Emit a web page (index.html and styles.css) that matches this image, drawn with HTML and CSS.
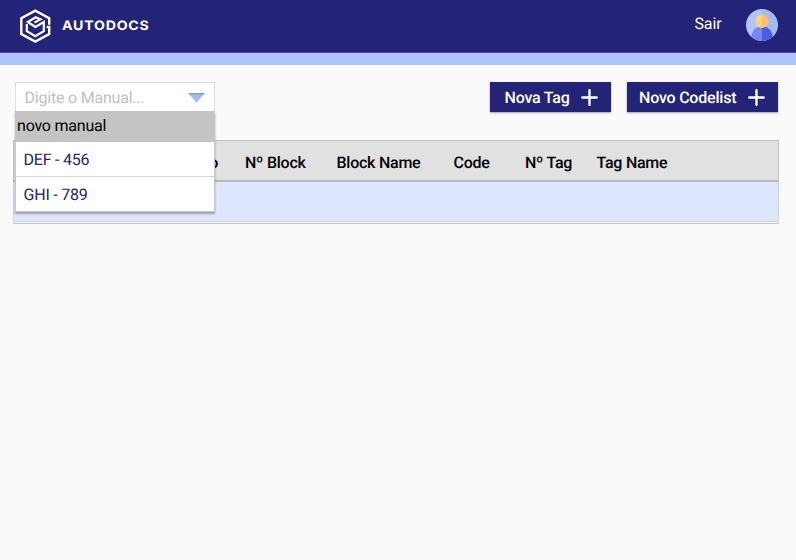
FILE: index.html
```html
<!DOCTYPE html>
<html lang="pt-BR">
<head>
<meta charset="utf-8">
<title>Autodocs</title>
<link rel="stylesheet" href="styles.css">
</head>
<body>
<header class="topbar">
  <div class="brand">
    <svg class="logo" viewBox="0 0 32 34" fill="none" stroke="#fff" stroke-width="2.4">
      <path d="M30.2 15.8V9.2L16.3 1.6 2.3 9.2V25L16.3 32.6 30.2 25V18H27.6"/>
      <path stroke-width="2.2" d="M7.8 15V22.1L16.3 27.1 24.8 22.1V13L16.4 17.9 8.8 13 16.6 8.2 21.4 10.4 15.4 13.4"/>
    </svg>
    <span class="wordmark">AUTODOCS</span>
  </div>
  <nav class="account">
    <span class="logout">Sair</span>
    <svg class="avatar" viewBox="0 0 32 32">
      <clipPath id="disc"><circle cx="16" cy="16" r="16"/></clipPath>
      <g clip-path="url(#disc)">
        <path fill="#afc5fc" d="M0 0h16v32H0z"/><path fill="#a3baf3" d="M16 0h16v32H16z"/>
        <path fill="#7b86ec" d="M16 17.5C9 17.5 5 22 5 32h11z"/>
        <path fill="#4a5ce8" d="M16 17.5C23 17.5 27 22 27 32H16z"/>
        <path fill="#ffd07d" d="M16 5.5a6.7 6.7 0 0 0 0 13.4z"/>
        <path fill="#ffc06b" d="M16 5.5a6.7 6.7 0 0 1 0 13.4z"/>
      </g>
    </svg>
  </nav>
</header>
<main class="content">
  <div class="toolbar">
    <div class="select">
      <div class="field"><span>Digite o Manual...</span>
        <svg class="caret" viewBox="0 0 17 10"><path fill="#a6bbfa" d="M0 0h17L8.5 9.7z"/><path fill="#8c9fdc" d="M0 0h17l-1.6 1.8H1.6z"/></svg>
      </div>
      <div class="menu">
        <div class="option active">novo manual</div>
        <div class="option">DEF - 456</div>
        <div class="option">GHI - 789</div>
      </div>
    </div>
    <div class="actions">
      <button class="button tag">Nova Tag<svg class="plus" viewBox="0 0 17 17"><path d="M8.5 1.3v14.4M1.3 8.5h14.4"/></svg></button>
      <button class="button codelist">Novo Codelist<svg class="plus" viewBox="0 0 17 17"><path d="M8.5 1.3v14.4M1.3 8.5h14.4"/></svg></button>
    </div>
  </div>
  <section class="records">
    <div class="row head">
      <span class="section">Seção</span><span>Nº Block</span><span>Block Name</span><span>Code</span><span>Nº Tag</span><span>Tag Name</span>
    </div>
    <div class="row empty"></div>
  </section>
</main>
</body>
</html>
```
FILE: styles.css
```css
* { box-sizing: border-box; }
body { margin: 0; background: #fafafa; font: 16px/20px Roboto, sans-serif; letter-spacing: -.21px; color: #000; text-rendering: geometricPrecision; }
.topbar { height: 65px; padding: 0 18px 0 19px; display: flex; justify-content: space-between; align-items: flex-start; background: #232378; border-bottom: 12px solid #afc5ff; box-shadow: inset 0 -1px #4c4c98; }
.brand { display: flex; align-items: center; height: 51px; }
.logo { width: 32px; height: 34px; }
.wordmark { margin: 1px 0 0 11px; color: #fff; font: 700 13px/20px Inter, sans-serif; letter-spacing: .7px; transform: scaleX(1.09); transform-origin: left; }
.account { display: flex; align-items: center; height: 50px; }
.logout { color: #fff; margin: -3px 24.5px 0 0; letter-spacing: -.1px; }
.avatar { width: 32px; height: 32px; }
.content { padding: 17px 17px 0 13px; }
.toolbar { display: flex; justify-content: space-between; height: 58px; }
.select { position: relative; width: 200px; margin-left: 2px; }
.field { display: flex; justify-content: space-between; align-items: center; height: 30px; padding: 1px 9px 0 8.5px; background: #fff; border: 1px solid #dedede; border-bottom: 0; color: #bfbfbf; }
.caret { width: 17px; height: 10px; }
.menu { position: absolute; top: 29px; left: 0; width: 200px; height: 101px; background: #fff; box-shadow: 0 2px 2px rgba(0,0,0,.3); border: 1px solid #c8c8c8; border-top: 0; }
.option { height: 35px; padding-left: 7.5px; line-height: 36px; color: #232378; }
.option + .option + .option { height: 36px; margin-top: -1px; border-top: 1px solid #d5d5d5; line-height: 35px; }
.option.active { height: 31px; margin: 0 -1px; padding-left: 2px; line-height: 30px; background: #c4c4c4; color: #000; }
.actions { display: flex; gap: 16px; padding-right: 1px; }
.button { display: flex; justify-content: space-between; align-items: center; height: 30px; border: 0; padding: 1px 13px 0 14.5px; background: #232378; color: #fff; font: 500 16px/20px Roboto, sans-serif; letter-spacing: inherit; text-rendering: inherit; box-shadow: 0 1px 2px rgba(0,0,0,.35); }
.tag { width: 121px; }
.codelist { width: 151px; padding-left: 12px; }
.plus { width: 17px; height: 17px; fill: none; stroke: #fff; stroke-width: 2.4; stroke-linecap: round; }
.records { width: 766px; border-bottom: 1px solid #c6c6c2; }
.row { border: 1px solid #c4c4c4; }
.head { display: grid; grid-template-columns: 231px 91.5px 117px 71.5px 71.5px 1fr; height: 42px; background: #e1e1e1; border-bottom: 2px solid #b8b9be; font-weight: 500; letter-spacing: -.25px; line-height: 44px; }
.section { justify-self: end; margin-right: 27px; }
.empty { height: 40px; margin-bottom: 1px; border-top: 0; border-color: #cbd3e6; background: #dfe6ff; }
```
